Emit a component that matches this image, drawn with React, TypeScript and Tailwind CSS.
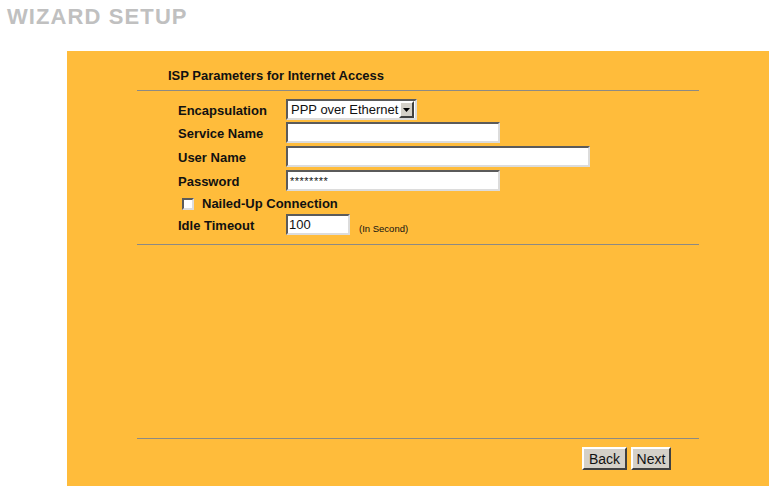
import React from 'react';

const inset = 'border-2 border-t-[#5b5b5b] border-l-[#5b5b5b] border-r-[#dcdcdc] border-b-[#dcdcdc] bg-white';
const outset = 'border-2 border-t-white border-l-white border-r-[#404040] border-b-[#404040] bg-[#d4d0c8]';

const Row: React.FC<{ h: string; label: string; children: React.ReactNode }> = ({ h, label, children }) => (
  <div className={`flex items-start ${h}`}>
    <div className="w-[108px] h-[22px] pt-[1px] flex items-center font-bold text-[13px]">{label}</div>
    {children}
  </div>
);

const App: React.FC = () => {
  return (
    <div className="w-[776px] h-[491px] bg-white overflow-hidden font-['Liberation_Sans',Arial,sans-serif] text-[#111]">
      <div className="h-[51px] pl-[7px] pt-[5px]">
        <h1 className="text-[22px] leading-[24px] font-bold tracking-[0.05em] text-[#c0c0c0]">WIZARD SETUP</h1>
      </div>

      <div className="ml-[67px] w-[702px] h-[435px] bg-[#ffbc3b] pl-[70px] flex flex-col">
        <div className="w-[562px] flex flex-col flex-1">
          <div className="pt-[17px] pl-[31px] h-[39px] text-[13px] leading-[16px] font-bold">
            ISP Parameters for Internet Access
          </div>
          <div className="h-px bg-[#8c8a84]" />

          <div className="pl-[41px] pt-[8px] flex flex-col">
            <Row h="h-[23px]" label="Encapsulation">
              <div className={`w-[131px] h-[21px] ${inset} flex items-center justify-between pl-[3px] pr-[1px]`}>
                <span className="text-[13px] leading-[15px]">PPP over Ethernet</span>
                <div className={`w-[15px] h-[17px] ${outset} flex items-center justify-center`}>
                  <svg width="7" height="4" viewBox="0 0 7 4">
                    <path d="M0 0h7L3.5 4z" fill="#000" />
                  </svg>
                </div>
              </div>
            </Row>
            <Row h="h-[24px]" label="Service Name">
              <div className={`w-[214px] h-[21px] ${inset}`} />
            </Row>
            <Row h="h-[24px]" label="User Name">
              <div className={`w-[304px] h-[21px] ${inset}`} />
            </Row>
            <Row h="h-[23px]" label="Password">
              <div className={`w-[214px] h-[21px] ${inset} flex items-center pl-[2px]`}>
                <span className="text-[11px] leading-[12px] tracking-[0.5px]">********</span>
              </div>
            </Row>
            <div className="h-[21px] flex items-center pl-[4px] pt-[1px]">
              <div className={`w-[12px] h-[12px] ${inset}`} />
              <span className="ml-[8px] font-bold text-[13px]">Nailed-Up Connection</span>
            </div>
            <Row h="h-[22px]" label="Idle Timeout">
              <div className={`w-[64px] h-[21px] ${inset} flex items-center pl-[1px]`}>
                <span className="text-[13px] leading-[15px]">100</span>
              </div>
              <span className="ml-[9px] mt-[9px] text-[9.5px] leading-[11px]">(In Second)</span>
            </Row>
          </div>

          <div className="mt-[8px] h-px bg-[#8c8a84]" />
          <div className="flex-1" />
          <div className="h-px bg-[#8c8a84]" />
          <div className="flex justify-end gap-[4px] pr-[28px] pt-[8px] h-[47px]">
            <button className={`w-[45px] h-[23px] ${outset} text-[14px] leading-[16px]`}>Back</button>
            <button className={`w-[40px] h-[23px] ${outset} text-[14px] leading-[16px]`}>Next</button>
          </div>
        </div>
      </div>
    </div>
  );
};

export default App;
